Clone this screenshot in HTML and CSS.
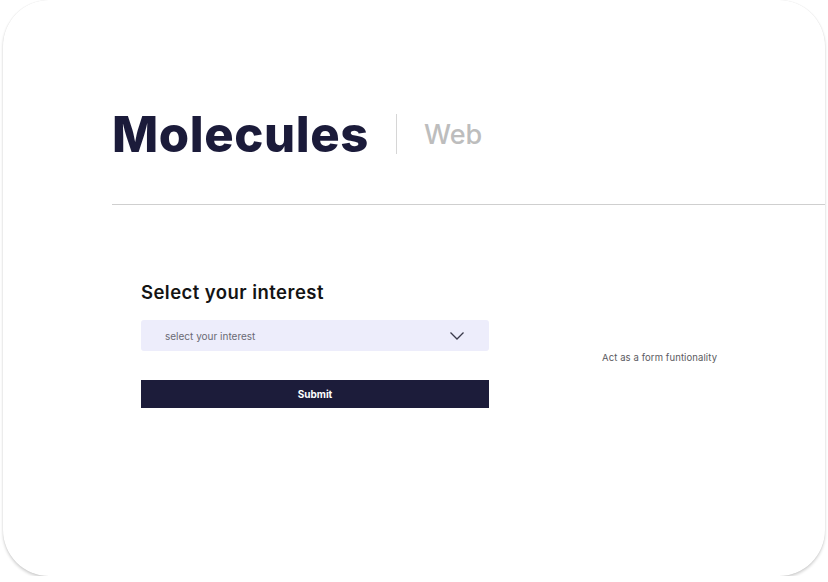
FILE: index.html
```html
<!DOCTYPE html>
<html>
<head>
<meta charset="utf-8">
<link rel="stylesheet" href="styles.css">
</head>
<body>
<div class="card">
  <header class="title-row">
    <h1 class="title">Molecules</h1>
    <span class="divider"></span>
    <span class="subtitle">Web</span>
  </header>
  <hr class="rule">
  <section class="content">
    <form class="form">
      <h2 class="label">Select your interest</h2>
      <div class="select">
        <span class="placeholder">select your interest</span>
        <svg class="chevron" width="16" height="10" viewBox="0 0 16 10"><path d="M1.5 1.5 L8 8 L14.5 1.5" fill="none" stroke="#3a3a4a" stroke-width="1.3"/></svg>
      </div>
      <button type="button" class="submit">Submit</button>
    </form>
    <p class="note">Act as a form funtionality</p>
  </section>
</div>
</body>
</html>
```
FILE: styles.css
```css
* { box-sizing: border-box; }
html, body { margin: 0; padding: 0; background: #ffffff; }
body { font-family: Inter, "Noto Sans", sans-serif; }
.card {
  margin: 0 3px 0 3px;
  height: 576px;
  background: #ffffff;
  border-radius: 46px;
  box-shadow: 0 2px 3px rgba(0,0,0,0.18), 0 0 1px rgba(0,0,0,0.12);
  overflow: hidden;
  padding-top: 104px;
}
.title-row {
  display: flex;
  align-items: center;
  padding-left: 109px;
  height: 60px;
}
.title {
  margin: 0;
  font-size: 49px;
  font-weight: 800;
  color: #1b1b3a;
  letter-spacing: 0.6px;
  line-height: 1;
}
.divider {
  width: 1px;
  height: 40px;
  background: #d6d6d6;
  margin-left: 27px;
}
.subtitle {
  margin-left: 27px;
  font-size: 27px;
  font-weight: 500;
  color: #bdbdbd;
}
.rule {
  margin: 40px 0 0 109px;
  border: 0;
  height: 1px;
  background: #cfcfcf;
}
.content {
  display: flex;
  padding-left: 138px;
  padding-top: 76px;
}
.form { width: 348px; }
.label {
  margin: 0 0 16px 0;
  font-size: 18.5px;
  font-weight: 600;
  color: #141414;
  letter-spacing: 0.45px;
  line-height: 23px;
}
.select {
  height: 31px;
  background: #ededfb;
  border-radius: 3px;
  display: flex;
  align-items: center;
  justify-content: space-between;
  padding: 0 24px 0 24px;
}
.placeholder { font-size: 10px; color: #6a6a74; }
.submit {
  margin-top: 29px;
  width: 100%;
  height: 28px;
  background: #1c1c3a;
  border: 0;
  border-radius: 0;
  color: #ffffff;
  font-family: Inter, sans-serif;
  font-size: 10px;
  font-weight: 700;
}
.note {
  margin: 71px 0 0 113px;
  font-size: 9.5px;
  letter-spacing: 0.1px;
  color: #5a5a60;
}
```
